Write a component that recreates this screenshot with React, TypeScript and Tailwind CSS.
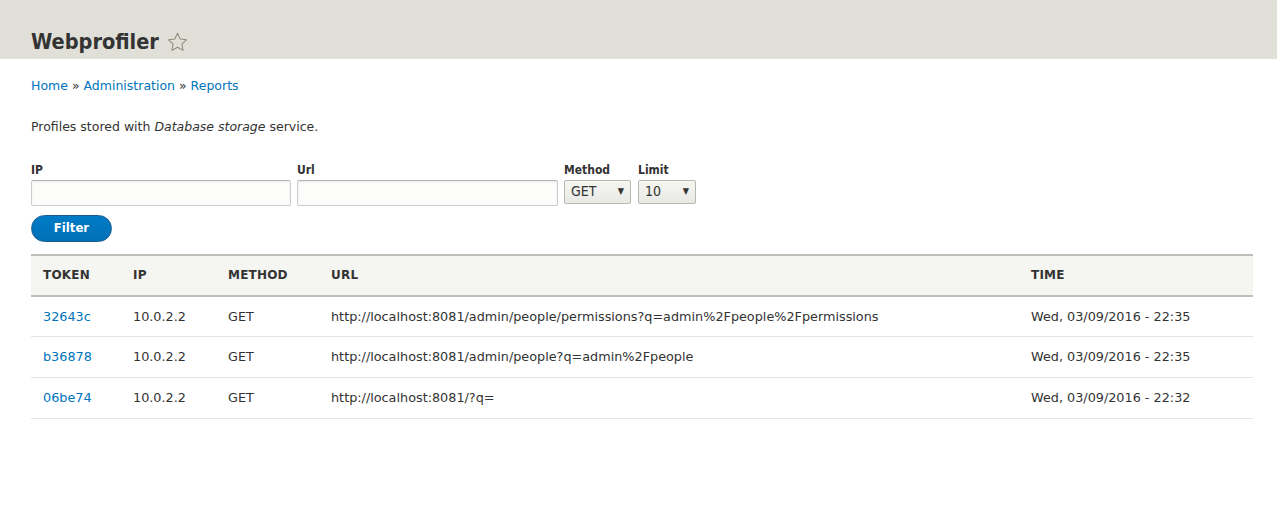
const rows = [
  { token: '32643c', ip: '10.0.2.2', method: 'GET', url: 'http://localhost:8081/admin/people/permissions?q=admin%2Fpeople%2Fpermissions', time: 'Wed, 03/09/2016 - 22:35' },
  { token: 'b36878', ip: '10.0.2.2', method: 'GET', url: 'http://localhost:8081/admin/people?q=admin%2Fpeople', time: 'Wed, 03/09/2016 - 22:35' },
  { token: '06be74', ip: '10.0.2.2', method: 'GET', url: 'http://localhost:8081/?q=', time: 'Wed, 03/09/2016 - 22:32' },
]

const condensed = { fontFamily: '"DejaVu Sans Condensed", "DejaVu Sans", sans-serif' }

function Select({ value, width }: { value: string; width: string }) {
  return (
    <div
      className={`${width} h-[24px] flex items-center justify-between pl-[6px] pr-[6px] border border-[#b8b8b0] rounded-[2px] bg-gradient-to-b from-[#f6f6f3] to-[#e8e8e4] text-[14px] text-[#333]`}
      style={condensed}
    >
      <span>{value}</span>
      <span className="text-[9px] text-[#333]">▼</span>
    </div>
  )
}

export default function App() {
  return (
    <div className="min-h-[520px] bg-white text-[#333]" style={{ fontFamily: '"DejaVu Sans", "Liberation Sans", sans-serif' }}>
      {/* page header */}
      <header className="h-[59px] bg-[#e0e0d8] px-[31px] flex items-end pb-[7px]">
        <h1 className="text-[21.5px] font-bold text-[#333] flex items-center gap-[8px] leading-none" style={condensed}>
          Webprofiler
          <svg width="21" height="20" viewBox="0 0 24 23" className="mt-[1px]">
            <path
              d="M12 1.5l3.1 6.6 7.2.9-5.3 5 1.4 7.1L12 17.6l-6.4 3.5L7 14l-5.3-5 7.2-.9z"
              fill="none"
              stroke="#8c8c7a"
              strokeWidth="1.2"
              strokeLinejoin="round"
            />
          </svg>
        </h1>
      </header>

      <main className="px-[31px]">
        <nav className="pt-[18px] text-[12.5px] text-[#333]">
          <a className="text-[#0074bd]">Home</a> » <a className="text-[#0074bd]">Administration</a> »{' '}
          <a className="text-[#0074bd]">Reports</a>
        </nav>

        <p className="mt-[22px] text-[12.5px]">
          Profiles stored with <em>Database storage</em> service.
        </p>

        {/* filter form */}
        <form className="mt-[25px]">
          <div className="flex gap-[6px] items-start">
            <label className="flex flex-col">
              <span className="text-[12px] font-bold leading-[16px] mb-[2px]" style={condensed}>IP</span>
              <input className="w-[260px] h-[26px] border border-[#ccc] border-t-[#b4b4b4] rounded-[2px] bg-[#fcfcfa] shadow-[inset_0_1px_2px_rgba(0,0,0,0.08)]" />
            </label>
            <label className="flex flex-col">
              <span className="text-[12px] font-bold leading-[16px] mb-[2px]" style={condensed}>Url</span>
              <input className="w-[261px] h-[26px] border border-[#ccc] border-t-[#b4b4b4] rounded-[2px] bg-[#fcfcfa] shadow-[inset_0_1px_2px_rgba(0,0,0,0.08)]" />
            </label>
            <label className="flex flex-col">
              <span className="text-[12px] font-bold leading-[16px] mb-[2px]" style={condensed}>Method</span>
              <Select value="GET" width="w-[67px]" />
            </label>
            <label className="flex flex-col ml-[1px]">
              <span className="text-[12px] font-bold leading-[16px] mb-[2px]" style={condensed}>Limit</span>
              <Select value="10" width="w-[58px]" />
            </label>
          </div>
          <button
            type="button"
            className="mt-[9px] w-[81px] h-[27px] rounded-full border border-[#1e5c90] bg-gradient-to-b from-[#007bc6] to-[#0071b8] text-white text-[13px] font-bold"
            style={condensed}
          >
            Filter
          </button>
        </form>

        {/* profiles table */}
        <table className="mt-[12px] w-[1222px] table-fixed border-collapse text-[12.8px]">
          <colgroup>
            <col className="w-[90px]" />
            <col className="w-[95px]" />
            <col className="w-[103px]" />
            <col className="w-[700px]" />
            <col />
          </colgroup>
          <thead>
            <tr className="h-[41px] bg-[#f5f5f2] border-t-2 border-t-[#bfbfba] border-b-2 border-b-[#bfbfba]">
              {['Token', 'IP', 'Method', 'Url', 'Time'].map((h) => (
                <th key={h} className="text-left px-[12px] font-bold uppercase text-[12px] tracking-[0.2px]">
                  {h}
                </th>
              ))}
            </tr>
          </thead>
          <tbody>
            {rows.map((r) => (
              <tr key={r.token} className="h-[41px] border-b border-[#e6e4df]">
                <td className="px-[12px]">
                  <a className="text-[#0074bd]">{r.token}</a>
                </td>
                <td className="px-[12px]">{r.ip}</td>
                <td className="px-[12px]">{r.method}</td>
                <td className="px-[12px] whitespace-nowrap">{r.url}</td>
                <td className="px-[12px]">{r.time}</td>
              </tr>
            ))}
          </tbody>
        </table>
      </main>
    </div>
  )
}
